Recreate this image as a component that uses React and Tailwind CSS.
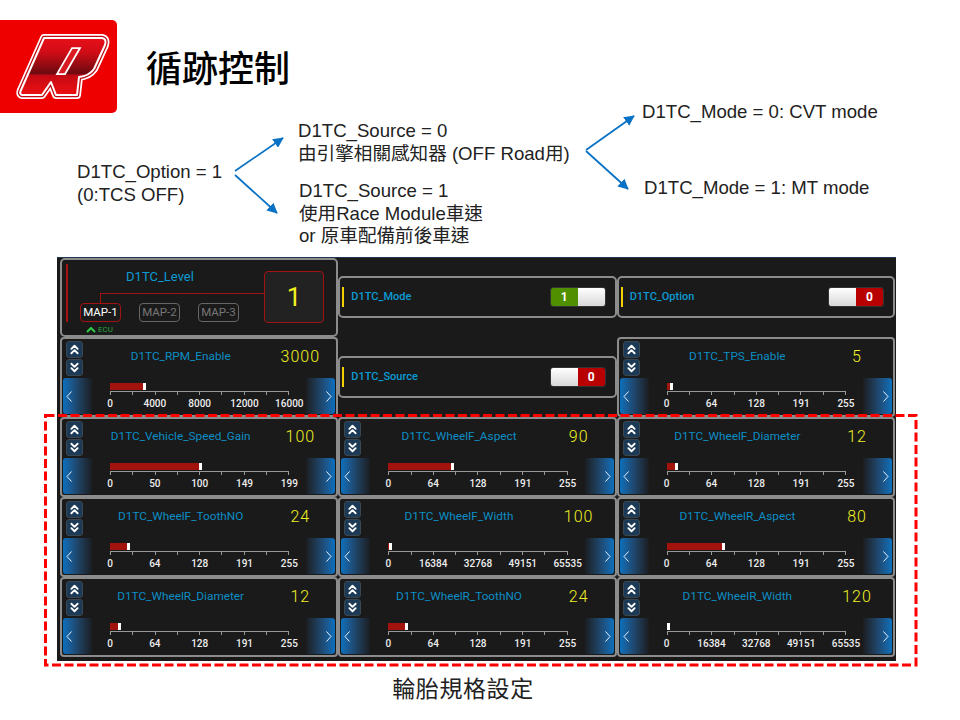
import React from "react";
import { ChevronsUp, ChevronsDown } from "lucide-react";

const sliderRows = [
    [
        { name: "D1TC_Vehicle_Speed_Gain", value: 100, max: 199, ticks: [0, 50, 100, 149, 199] },
        { name: "D1TC_WheelF_Aspect", value: 90, max: 255, ticks: [0, 64, 128, 191, 255] },
        { name: "D1TC_WheelF_Diameter", value: 12, max: 255, ticks: [0, 64, 128, 191, 255] },
    ],
    [
        { name: "D1TC_WheelF_ToothNO", value: 24, max: 255, ticks: [0, 64, 128, 191, 255] },
        { name: "D1TC_WheelF_Width", value: 100, max: 65535, ticks: [0, 16384, 32768, 49151, 65535] },
        { name: "D1TC_WheelR_Aspect", value: 80, max: 255, ticks: [0, 64, 128, 191, 255] },
    ],
    [
        { name: "D1TC_WheelR_Diameter", value: 12, max: 255, ticks: [0, 64, 128, 191, 255] },
        { name: "D1TC_WheelR_ToothNO", value: 24, max: 255, ticks: [0, 64, 128, 191, 255] },
        { name: "D1TC_WheelR_Width", value: 120, max: 65535, ticks: [0, 16384, 32768, 49151, 65535] },
    ],
];

const LOGO_R =
    "M44 18 L102 18 Q107 19 105 25 L94 49 Q89 56 79 57 L77 75 L56 75 L51 62 L42 75 L22 75 Q19 74 21 70 Z";

const Logo = () => (
    <div className="w-[117px] h-[93px] bg-[#ee0000] rounded-r-[5px]">
        <svg width="117" height="93" viewBox="0 0 117 93">
            <defs>
                <linearGradient id="rFill" x1="0" y1="0" x2="0" y2="1">
                    <stop offset="0" stopColor="#e8101a" />
                    <stop offset="0.25" stopColor="#d00c16" />
                    <stop offset="0.62" stopColor="#6d0a10" />
                    <stop offset="0.66" stopColor="#c40a14" />
                    <stop offset="1" stopColor="#ee1010" />
                </linearGradient>
            </defs>
            <path d={LOGO_R} fill="#ffffff" stroke="#ffffff" strokeWidth="8" strokeLinejoin="round" />
            <path d={LOGO_R} fill="#ffffff" stroke="#c00a14" strokeWidth="4.5" strokeLinejoin="round" />
            <path d={LOGO_R} fill="url(#rFill)" stroke="#ffffff" strokeWidth="2" strokeLinejoin="round" />
            <path d="M72 28 L80 28 L65 54 L57 54 Z" fill="#d91a22" stroke="#ffffff" strokeWidth="1.75" />
        </svg>
    </div>
);

const Arrow = ({ x1, y1, x2, y2 }) => (
    <line x1={x1} y1={y1} x2={x2} y2={y2} stroke="#0a72c4" strokeWidth="1.75" markerEnd="url(#arrowHead)" />
);

const FlowDiagram = () => (
    <div className="relative h-[144px] text-[18.6px] leading-[22.5px] text-[#222222]">
        <svg className="absolute left-0 top-0" width="960" height="144" viewBox="0 0 960 144">
            <defs>
                <marker id="arrowHead" markerWidth="6" markerHeight="6" refX="5.5" refY="3" orient="auto">
                    <path d="M0 0 L6 3 L0 6 Z" fill="#0a72c4" />
                </marker>
            </defs>
            <Arrow x1={235} y1={58} x2={283} y2={25} />
            <Arrow x1={235} y1={62} x2={277} y2={100} />
            <Arrow x1={586} y1={37} x2={634} y2={3} />
            <Arrow x1={586} y1={38} x2={628} y2={76} />
        </svg>
        <div className="absolute left-[77px] top-[48px]">
            <div>D1TC_Option = 1</div>
            <div>(0:TCS OFF)</div>
        </div>
        <div className="absolute left-[298px] top-[7px] whitespace-nowrap">
            <div>D1TC_Source = 0</div>
            <div>由引擎相關感知器 (OFF Road用)</div>
        </div>
        <div className="absolute left-[299px] top-[67px] whitespace-nowrap">
            <div>D1TC_Source = 1</div>
            <div>使用Race Module車速</div>
            <div>or 原車配備前後車速</div>
        </div>
        <div className="absolute left-[642px] top-[-12px] whitespace-nowrap">D1TC_Mode = 0: CVT mode</div>
        <div className="absolute left-[644px] top-[64px] whitespace-nowrap">D1TC_Mode = 1: MT mode</div>
    </div>
);

const StepButton = ({ up }) => (
    <div className="w-[17px] h-[17px] rounded-[3px] bg-[#1c3a55] border border-[#3a4650] flex items-center justify-center text-white">
        {up ? <ChevronsUp size={15} strokeWidth={3} /> : <ChevronsDown size={15} strokeWidth={3} />}
    </div>
);

const NudgeButton = ({ right }) => (
    <div
        className={
            right
                ? "w-[29px] h-[36px] rounded-r-[3px] bg-gradient-to-r from-[#1a1e22] to-[#0870bd] flex items-center justify-end pr-[3px]"
                : "w-[29px] h-[36px] rounded-l-[3px] bg-gradient-to-r from-[#0870bd] to-[#1a1e22] flex items-center justify-start pl-[3px]"
        }
    >
        <svg width="6" height="11" viewBox="0 0 6 11" fill="none" stroke="#e6f0fa" strokeWidth="1">
            <polyline points={right ? "0.5,0.5 5,5.5 0.5,10.5" : "5.5,0.5 1,5.5 5.5,10.5"} />
        </svg>
    </div>
);

const Scale = ({ value, max, ticks }) => (
    <div className="flex-1 pl-[18px] pr-[17px] pt-[5px]">
        <div className="h-[7px] flex">
            <div className="bg-[#a3130d] h-full" style={{ width: (value / max) * 178 }} />
            <div className="bg-white w-[3px] h-full" />
        </div>
        <div className="mt-[1px] border-t border-[#999999] flex justify-between">
            {[0, 1, 2, 3, 4, 5, 6, 7, 8].map((i) => (
                <div key={i} className="w-px h-[3px] bg-[#999999]" />
            ))}
        </div>
        <div className="mt-[2px] flex justify-between text-[10px] leading-[14px] font-medium text-[#eeeeee]">
            {ticks.map((t) => (
                <div key={t} className="w-0 flex justify-center">
                    {t}
                </div>
            ))}
        </div>
    </div>
);

const SliderCard = ({ name, value, max, ticks }) => (
    <div className="h-[80px] border-2 border-[#8c8c8c] rounded-[4px] bg-[#1a1a1a] flex flex-col">
        <div className="flex items-start pt-[2px] pl-[4px] h-[39px]">
            <div className="flex flex-col gap-px">
                <StepButton up />
                <StepButton />
            </div>
            <div className="flex-1 ml-[8px] mt-[7px] text-center text-[11.8px] leading-[17px] text-[#0c8dc4]">{name}</div>
            <div className="w-[60px] mr-[6px] mt-[7px] text-center text-[16px] leading-[17px] tracking-[1px] font-light text-[#f2f224]">
                {value}
            </div>
        </div>
        <div className="flex px-px">
            <NudgeButton />
            <Scale value={value} max={max} ticks={ticks} />
            <NudgeButton right />
        </div>
    </div>
);

const Toggle = ({ on }) => (
    <div className="w-[56px] h-[20px] rounded-[3px] border border-[#333333] overflow-hidden flex text-[12px] font-bold text-white">
        {on ? (
            <>
                <div className="flex-1 bg-[#4f8f00] flex items-center justify-center">1</div>
                <div className="flex-1 bg-gradient-to-b from-[#ffffff] to-[#d8d8d8]" />
            </>
        ) : (
            <>
                <div className="flex-1 bg-gradient-to-b from-[#ffffff] to-[#d8d8d8]" />
                <div className="flex-1 bg-[#b80000] flex items-center justify-center">0</div>
            </>
        )}
    </div>
);

const ToggleCard = ({ name, on }) => (
    <div className="h-[42px] border-2 border-[#8c8c8c] rounded-[5px] bg-[#1a1a1a] flex items-center pl-[2px] pr-[9px]">
        <div className="w-[2px] h-[20px] bg-[#f5d000]" />
        <div className="flex-1 ml-[7px] text-[11px] font-medium text-[#0c9ad4]">{name}</div>
        <Toggle on={on} />
    </div>
);

const MapChip = ({ label, active }) => (
    <div
        className={
            active
                ? "w-[41px] h-[19px] rounded-[4px] border border-[#a31212] text-white text-[11.5px] leading-[17px] text-center"
                : "w-[41px] h-[19px] rounded-[4px] border border-[#666666] text-[#777777] text-[11.5px] leading-[17px] text-center"
        }
    >
        {label}
    </div>
);

const LevelCard = () => (
    <div className="relative h-[79px] border-2 border-[#8c8c8c] rounded-[5px] bg-[#1a1a1a] flex">
        <div className="w-[2px] h-[58px] bg-[#a31212] ml-[4px] mt-[4px]" />
        <div className="w-[160px] ml-[12px]">
            <div className="text-center text-[13px] leading-[16px] mt-[9px] text-[#0c9ad4]">D1TC_Level</div>
            <div className="flex gap-[18px] mt-[18px]">
                <MapChip label="MAP-1" active />
                <MapChip label="MAP-2" />
                <MapChip label="MAP-3" />
            </div>
            <div className="flex items-center gap-[2px] ml-[6px] mt-[3px] text-[8px] leading-[10px] text-[#22a83c]">
                <svg width="10" height="6" viewBox="0 0 10 6" fill="none" stroke="#2ecc4a" strokeWidth="2">
                    <polyline points="1,5 5,1 9,5" />
                </svg>
                ECU
            </div>
        </div>
        <div className="w-[60px] h-[52px] ml-[24px] mt-[11px] rounded-[4px] border border-[#a31212] bg-[#222222] flex items-center justify-center text-[26px] text-[#f0f020]">
            1
        </div>
        {/* line joining MAP-1 to the level box */}
        <div className="absolute left-[38px] top-[33px] w-[164px] h-[10px] border-l border-t border-[#a31212]" />
    </div>
);

const App = () => {
    return (
        <div className="relative w-[960px] h-[720px] bg-white overflow-hidden font-['Liberation_Sans','Noto_Sans_CJK_TC',sans-serif]">
            <div className="flex items-center h-[93px] mt-[20px]">
                <Logo />
                <div className="ml-[29px] mb-[2px] text-[36px] leading-none text-black font-['Noto_Sans_CJK_TC',sans-serif] font-medium">
                    循跡控制
                </div>
            </div>

            <FlowDiagram />

            <div className="ml-[57px] w-[839px] h-[404px] bg-[#1a1a1a] border-t border-[#1c3a55] pl-[3px] font-['Roboto','Noto_Sans_CJK_TC',sans-serif]">
                <div className="grid grid-cols-3 gap-x-0 w-[835px]">
                    <div className="flex flex-col">
                        <LevelCard />
                        <SliderCard name="D1TC_RPM_Enable" value={3000} max={16000} ticks={[0, 4000, 8000, 12000, 16000]} />
                    </div>
                    <div className="flex flex-col pt-[18px] gap-[38px]">
                        <ToggleCard name="D1TC_Mode" on />
                        <ToggleCard name="D1TC_Source" />
                    </div>
                    <div className="flex flex-col">
                        <div className="h-[79px] pt-[18px]">
                            <ToggleCard name="D1TC_Option" />
                        </div>
                        <SliderCard name="D1TC_TPS_Enable" value={5} max={255} ticks={[0, 64, 128, 191, 255]} />
                    </div>
                    {sliderRows.map((row) =>
                        row.map((card) => <SliderCard key={card.name} {...card} />)
                    )}
                </div>
            </div>

            <div className="mt-[12px] pr-[34px] text-center text-[23px] leading-[28px] text-[#222222] font-['Noto_Sans_CJK_TC',sans-serif] tracking-[0.6px]">
                輪胎規格設定
            </div>

            {/* red dashed frame drawn over the three slider rows */}
            <svg className="absolute left-0 top-0 pointer-events-none" width="960" height="720" viewBox="0 0 960 720" fill="none">
                <rect x="45.5" y="415.5" width="870.5" height="249.5" stroke="#ff0000" strokeWidth="3" strokeDasharray="9 3.5" />
            </svg>
        </div>
    );
};

export default App;
